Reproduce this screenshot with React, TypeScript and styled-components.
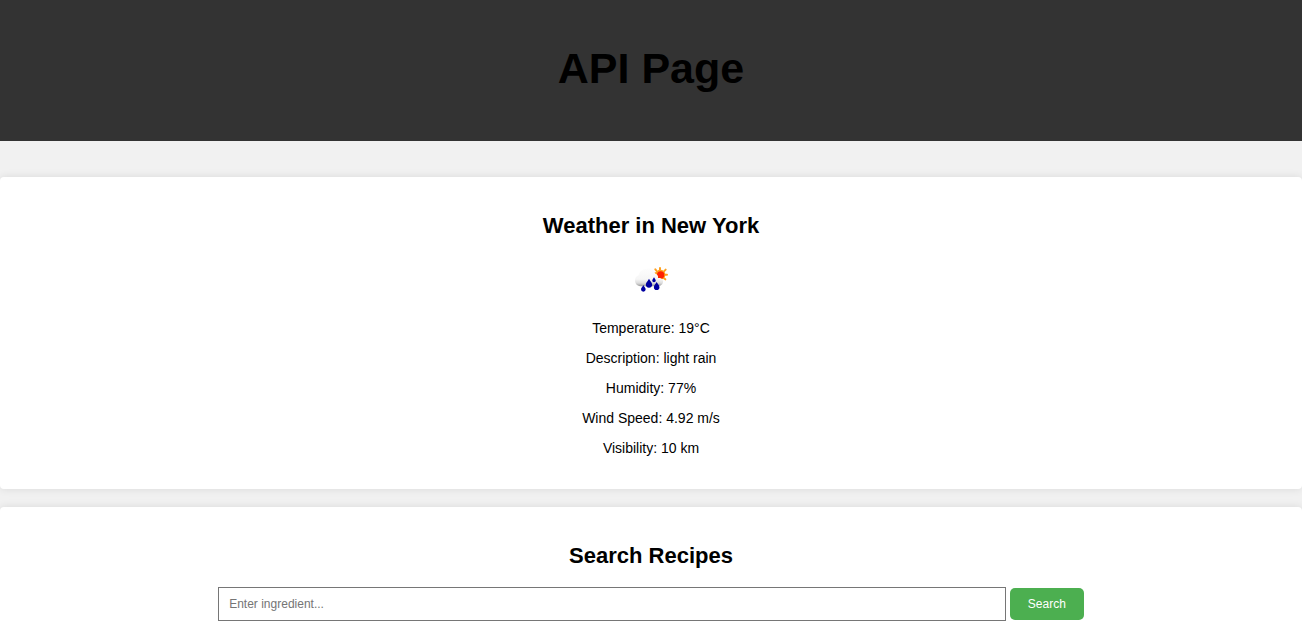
import React from "react";
import styled, { createGlobalStyle } from "styled-components";

const GlobalStyle = createGlobalStyle`
  body {
    margin: 0;
    background: #f1f1f1;
    color: #000;
    font-family: Arial, "Liberation Sans", sans-serif;
    font-size: 14px;
    line-height: 16px;
  }
`;

const Page = styled.div`
  display: flex;
  flex-direction: column;
  min-height: 100vh;
`;

const Header = styled.header`
  padding: 43px 18px 48px;
  margin-bottom: 36px;
  background: #333;
  text-align: center;
`;

const Title = styled.h1`
  margin: 0;
  font-size: 43px;
  line-height: 50px;
`;

const Main = styled.main`
  display: flex;
  flex: 1;
  flex-direction: column;
  gap: 18px;
`;

const Panel = styled.section<{ $fill?: boolean }>`
  flex: ${(p) => (p.$fill ? "1" : "none")};
  padding: 36px 13px ${(p) => (p.$fill ? "0" : "33px")};
  border-radius: ${(p) => (p.$fill ? "4px 4px 0 0" : "4px")};
  background: #fff;
  box-shadow: 0 0 9px rgba(0, 0, 0, 0.1);
  text-align: center;
`;

const Heading = styled.h2`
  margin: 0 0 18px;
  font-size: 22px;
  line-height: 26px;
`;

const Icon = styled.svg`
  display: block;
  width: 50px;
  height: 45px;
  margin: 0 auto 18px;
`;

const Facts = styled.div`
  display: flex;
  flex-direction: column;
  gap: 14px;
`;

const Fact = styled.p`
  margin: 0;
`;

const SearchForm = styled.form`
  display: flex;
  align-items: center;
  justify-content: center;
  gap: 4px;
`;

const SearchInput = styled.input`
  box-sizing: content-box;
  width: 60%;
  height: 14px;
  padding: 9px 10px;
  border: 1px solid #767676;
  border-radius: 0;
  background: #fff;
  color: #000;
  font: 12px/14px Arial, "Liberation Sans", sans-serif;

  &::placeholder {
    color: #757575;
  }
`;

const SearchButton = styled.button`
  padding: 9px 18px;
  border: 0;
  border-radius: 5px;
  background: #4caf50;
  color: #fff;
  font: 12px/14px Arial, "Liberation Sans", sans-serif;
  cursor: pointer;
`;

const facts = [
  "Temperature: 19°C",
  "Description: light rain",
  "Humidity: 77%",
  "Wind Speed: 4.92 m/s",
  "Visibility: 10 km",
];

const drops = [
  { x: 52, y: 87, s: 1 },
  { x: 69, y: 68, s: 1.35 },
  { x: 84, y: 64, s: 0.75 },
  { x: 92, y: 78, s: 1.2 },
];

function RainIcon() {
  return (
    <Icon viewBox="0 3 150 135" role="img" aria-label="light rain">
      <defs>
        <linearGradient id="cloud" x1="0" y1="0" x2="0" y2="1">
          <stop offset="0" stopColor="#fdfdfd" />
          <stop offset="0.6" stopColor="#f6f6f6" />
          <stop offset="0.82" stopColor="#dcdcdc" />
          <stop offset="1" stopColor="#999" />
        </linearGradient>
      </defs>
      <g stroke="#ffa01e" strokeWidth="6" strokeLinecap="round">
        <path d="M102 36v7M119 41l-5 5M123 56h-7M118 70l-5-4M88 40l4 5M84 52h6" />
      </g>
      <circle cx="103" cy="56" r="15" fill="#ffa01e" />
      <circle cx="104" cy="57" r="11" fill="#ff2000" />
      <path
        d="M27 75c-1-9 4-15 11-17 3-13 12-20 23-19 11-4 24 2 27 14 8 3 9 8 8 13 10-1 17 5 15 13-2 9-10 12-19 12H47c-11 0-19-6-20-16z"
        fill="url(#cloud)"
      />
      {drops.map(({ x, y, s }) => (
        <path
          key={x}
          d="M0 0C-2 5-7 8-7 13a7 7 0 0 0 14 0C7 8 2 5 0 0z"
          transform={`translate(${x} ${y}) scale(${s})`}
          fill="#0000a0"
        />
      ))}
    </Icon>
  );
}

export default function App() {
  return (
    <Page>
      <GlobalStyle />
      <Header>
        <Title>API Page</Title>
      </Header>
      <Main>
        <Panel>
          <Heading>Weather in New York</Heading>
          <RainIcon />
          <Facts>
            {facts.map((fact) => (
              <Fact key={fact}>{fact}</Fact>
            ))}
          </Facts>
        </Panel>
        <Panel $fill>
          <Heading>Search Recipes</Heading>
          <SearchForm onSubmit={(e) => e.preventDefault()}>
            <SearchInput
              type="text"
              aria-label="Ingredient"
              placeholder="Enter ingredient..."
            />
            <SearchButton type="submit">Search</SearchButton>
          </SearchForm>
        </Panel>
      </Main>
    </Page>
  );
}
